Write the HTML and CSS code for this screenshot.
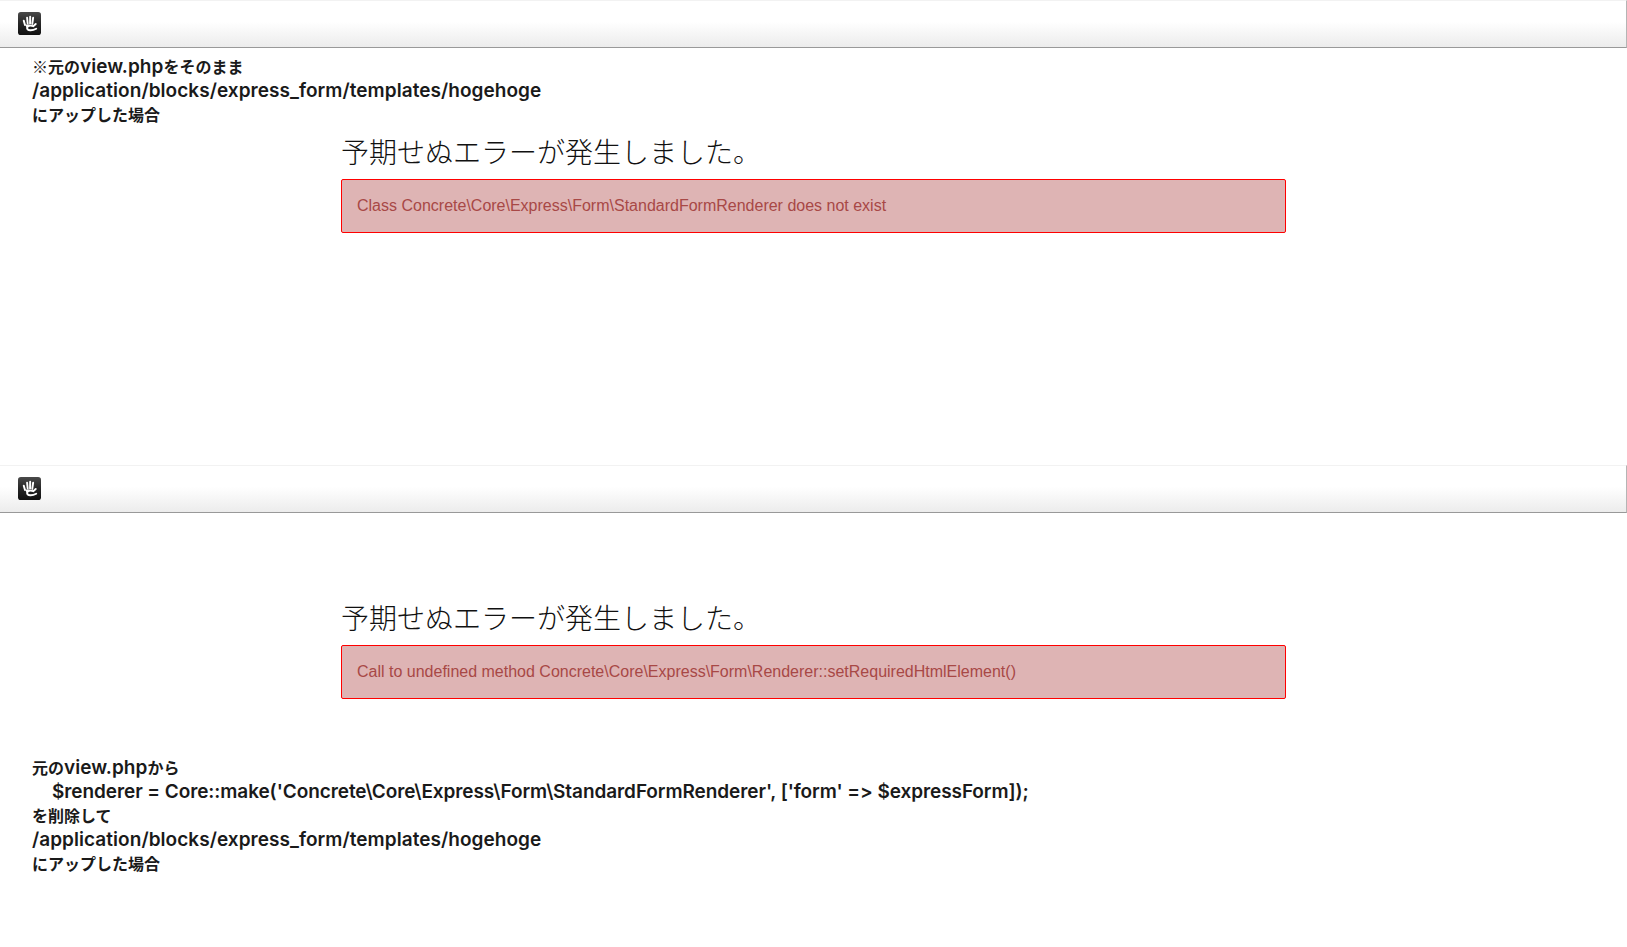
FILE: index.html
```html
<!DOCTYPE html>
<html lang="ja">
<head>
<meta charset="utf-8">
<title>予期せぬエラーが発生しました。</title>
<link rel="stylesheet" href="styles.css">
</head>
<body>
<section class="shot shot-first">
  <header class="bar">
    <svg class="logo" viewBox="0 0 24 24" aria-hidden="true">
      <defs><linearGradient id="g1" x1="0" y1="0" x2="0" y2="1"><stop offset="0" stop-color="#4a4a4a"/><stop offset="0.5" stop-color="#262626"/><stop offset="1" stop-color="#111"/></linearGradient></defs>
      <rect width="24" height="24" rx="3" fill="url(#g1)"/>
      <path d="M6 9l1.300 4.500M9.500 6l.6 6M12.700 5l-.1 7M15.800 6l-.9 6.500" stroke="#fff" stroke-width="2" stroke-linecap="round" fill="none"/>
      <path d="M7.300 13l1.700 3.500 3-3.500z" fill="#fff"/>
      <path d="M18.500 12.500l-2.500 2.300c-3-1.200-6.500-.6-6.500 1.900 0 3 5.500 2.900 9.500.8" stroke="#fff" stroke-width="2" stroke-linecap="round" fill="none"/>
    </svg>
  </header>
  <div class="note note-top">
    <p>※元の<span class="en">view.php</span>をそのまま</p>
    <p><span class="en">/application/blocks/express_form/templates/hogehoge</span></p>
    <p>にアップした場合</p>
  </div>
  <div class="error">
    <h1>予期せぬエラーが発生しました。</h1>
    <div class="alert">Class Concrete\Core\Express\Form\StandardFormRenderer does not exist</div>
  </div>
</section>
<section class="shot shot-second">
  <header class="bar">
    <svg class="logo" viewBox="0 0 24 24" aria-hidden="true">
      <rect width="24" height="24" rx="3" fill="url(#g1)"/>
      <path d="M6 9l1.300 4.500M9.500 6l.6 6M12.700 5l-.1 7M15.800 6l-.9 6.500" stroke="#fff" stroke-width="2" stroke-linecap="round" fill="none"/>
      <path d="M7.300 13l1.700 3.500 3-3.500z" fill="#fff"/>
      <path d="M18.500 12.500l-2.500 2.300c-3-1.200-6.500-.6-6.500 1.900 0 3 5.500 2.900 9.500.8" stroke="#fff" stroke-width="2" stroke-linecap="round" fill="none"/>
    </svg>
  </header>
  <div class="error error-second">
    <h1>予期せぬエラーが発生しました。</h1>
    <div class="alert">Call to undefined method Concrete\Core\Express\Form\Renderer::setRequiredHtmlElement()</div>
  </div>
  <div class="note note-bottom">
    <p>元の<span class="en">view.php</span>から</p>
    <p class="indent"><span class="en code">$renderer = Core::make('Concrete\Core\Express\Form\StandardFormRenderer', ['form' =&gt; $expressForm]);</span></p>
    <p>を削除して</p>
    <p><span class="en">/application/blocks/express_form/templates/hogehoge</span></p>
    <p>にアップした場合</p>
  </div>
</section>
</body>
</html>
```

FILE: styles.css
```css
* { box-sizing: border-box; }
html, body { margin: 0; padding: 0; background: #fff; }
body { width: 1627px; height: 947px; overflow: hidden; font-family: "Liberation Sans", "Noto Sans CJK JP", sans-serif; color: #111; }
.shot-first { height: 465px; }
.bar {
  height: 48px;
  display: flex;
  align-items: flex-start;
  padding: 11px 0 0 18px;
  border-top: 1px solid #f2f2f2;
  border-right: 1px solid #b5b5b5;
  border-bottom: 1px solid #999;
  background: linear-gradient(#fff 0%, #fff 45%, #ececec 100%);
}
.logo { width: 23px; height: 23px; display: block; }
.note { padding-left: 32px; }
.note p { margin: 0; height: 24px; font-family: "Noto Sans CJK JP", sans-serif; font-size: 16px; line-height: 24px; font-weight: 700; color: #1a1a1a; }
.note .en { font-family: "Inter", sans-serif; font-size: 19px; font-weight: 600; letter-spacing: 0.05px; line-height: 1; font-feature-settings: "calt" 0; }
.note .code { letter-spacing: -0.08px; }
.note-top { padding-top: 6px; height: 78px; }
.note-bottom { padding-top: 56px; }
.indent { padding-left: 20px; }
.error { margin: 0 341px; width: 945px; }
.error h1 { margin: 0; font-family: "Noto Sans CJK JP", sans-serif; font-size: 28px; font-weight: 300; line-height: 51px; height: 53px; color: #111; }
.alert {
  height: 54px;
  padding: 0 15px;
  display: flex;
  align-items: center;
  background: #deb4b4;
  border: 1px solid #f00;
  border-radius: 2px;
  color: #a84846;
  font-size: 16px;
}
.error-second { padding-top: 79px; }
```
